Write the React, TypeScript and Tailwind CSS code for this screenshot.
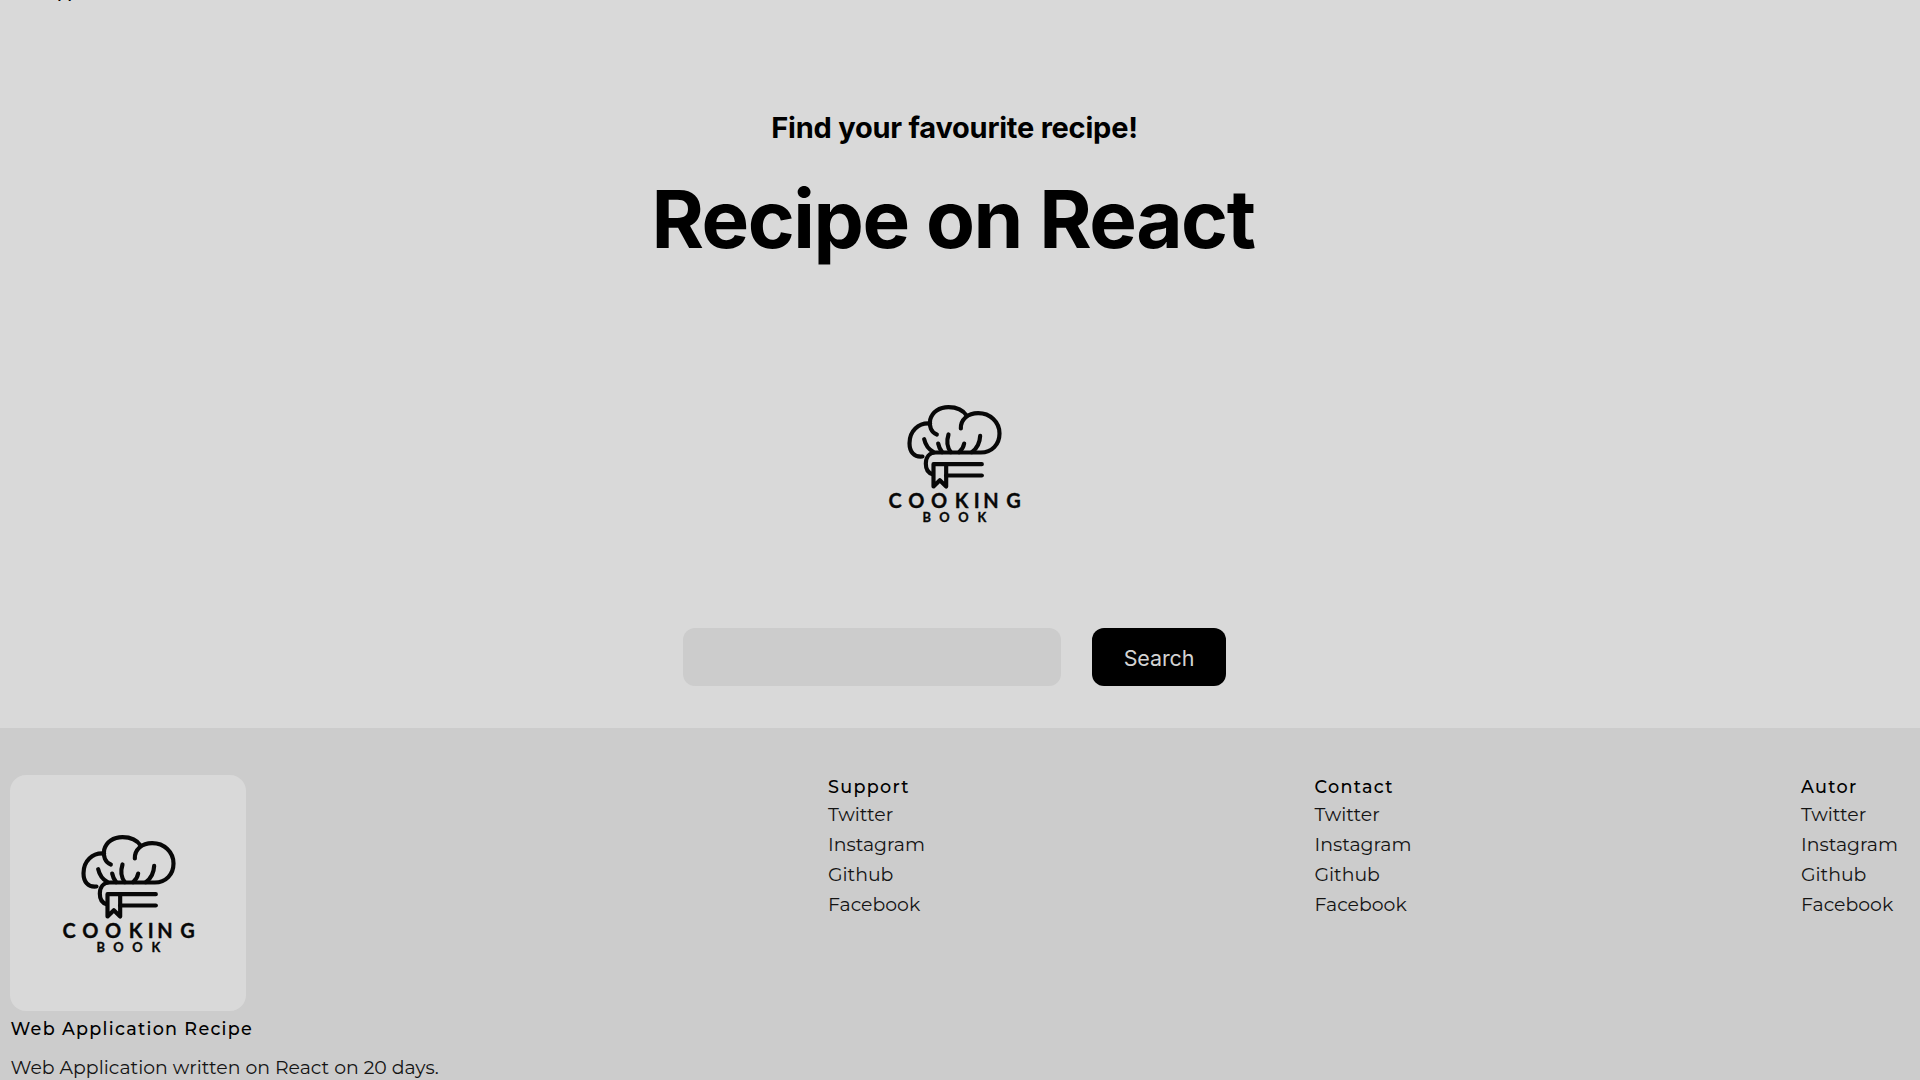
const links = ["Twitter", "Instagram", "Github", "Facebook"];

const columns = ["Support", "Contact", "Autor"];

function Logo() {
  return (
    <svg
      viewBox="0 0 708 708"
      className="block size-[236px]"
      fill="none"
      stroke="#080808"
      strokeWidth="12.5"
      strokeLinecap="round"
      strokeLinejoin="round"
      role="img"
      aria-label="Cooking Book"
    >
      <g transform="translate(101.500 134.500)">
        <path d="M158 200C132 203 119 185 119 160C119 124 145 98 181 101" />
        <path d="M201 134C184 128 177 109 181 90C187 66 209 52 236 52C259 52 280 61 291 78" />
        <path d="M273 116C272 89 294 70 325 70C361 70 389 97 389 131C389 164 366 188 333 188H198C178 188 168 203 168 222C168 239 176 250 188 253" />
        <path d="M163 148C167 166 177 179 191 187" />
        <path d="M205 161C207 171 211 180 217 187" />
        <path d="M236 134C230 153 233 174 243 187" />
        <path d="M283 161C281 172 275 181 268 187" />
        <path d="M331 138C330 159 321 176 306 187" />
        <path d="M336 223H191V290L210 271L229 290V223" />
        <path d="M229 257H336" />
        <g
          fill="#080808"
          stroke="#080808"
          strokeWidth="1"
          textAnchor="middle"
          className="font-['Lato',sans-serif] font-bold"
        >
          <text x="76 139.500 208 275 320.500 363.500 431" y="355" fontSize="60">
            COOKING
          </text>
          <text x="171 223.500 281 336" y="397" fontSize="38.500">
            BOOK
          </text>
        </g>
      </g>
    </svg>
  );
}

export default function App() {
  return (
    <div className="flex h-[1080px] w-full flex-col overflow-hidden bg-[#d9d9d9] text-black">
      <header className="flex h-px items-end overflow-hidden pl-[46px] font-['Montserrat','Lato',sans-serif] text-[15px] leading-[15px] font-semibold">
        <span>App</span>
      </header>
      <main className="flex h-[727px] shrink-0 flex-col items-center pr-[11px] pt-[109px] font-['Inter',sans-serif]">
        <h3 className="text-[29px] leading-9 font-bold tracking-[-0.222px]">
          Find your favourite recipe!
        </h3>
        <h1 className="mt-[25px] pr-[3px] text-[80px] leading-[96px] font-bold tracking-[-1.52px]">
          Recipe on React
        </h1>
        <div className="mt-[78px] pr-[1px]">
          <Logo />
        </div>
        <form className="mt-[47px] flex gap-[31px]">
          <input
            aria-label="Recipe"
            className="h-[58px] w-[378px] rounded-xl bg-[#cccccc] outline-none"
          />
          <button
            type="button"
            className="h-[58px] w-[134px] rounded-xl bg-black pt-[2px] text-[21.5px] tracking-[-0.12px] text-[#d3d3d3]"
          >
            Search
          </button>
        </form>
      </main>
      <footer className="grid h-[352px] shrink-0 grid-cols-[818px_486.500px_486.500px_auto] bg-[#cccccc] pt-[47px] pl-[10px] font-['Montserrat','Lato',sans-serif]">
        <div>
          <div className="size-[236px] rounded-2xl bg-[#d9d9d9]">
            <Logo />
          </div>
          <h4 className="mt-[6px] pl-[0.5px] text-[17.6px] leading-6 font-medium tracking-[1.26px]">
            Web Application Recipe
          </h4>
          <p className="mt-[12px] pl-[0.5px] text-[18.86px] leading-[30px] text-[#141414]">
            Web Application written on React on 20 days.
          </p>
        </div>
        {columns.map((title) => (
          <div key={title}>
            <h4 className="-mt-px text-[17.6px] leading-[26px] font-medium tracking-[1.3px]">
              {title}
            </h4>
            <ul className="text-[18.86px] leading-[30px] text-[#141414]">
              {links.map((link) => (
                <li key={link}>{link}</li>
              ))}
            </ul>
          </div>
        ))}
      </footer>
    </div>
  );
}
